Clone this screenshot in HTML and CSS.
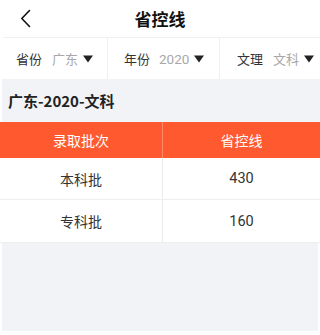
FILE: index.html
```html
<!DOCTYPE html>
<html lang="zh">
<head>
<meta charset="utf-8">
<link rel="stylesheet" href="styles.css">
</head>
<body>
<div class="page">
  <header class="topbar">
    <svg class="back" width="12" height="20" viewBox="0 0 12 20"><path d="M9.5 1.5 L1.8 9.5 L9.5 17.5" fill="none" stroke="#111" stroke-width="1.6" stroke-linecap="round" stroke-linejoin="round"/></svg>
    <h1 class="title">省控线</h1>
  </header>
  <div class="filters">
    <div class="filter f1"><span class="lbl">省份</span><span class="val">广东</span><svg class="tri" width="10" height="8" viewBox="0 0 10 8"><path d="M0 0.5 H10 L5 7.5 Z" fill="#222"/></svg></div>
    <div class="filter f2"><span class="lbl">年份</span><span class="val">2020</span><svg class="tri" width="10" height="8" viewBox="0 0 10 8"><path d="M0 0.5 H10 L5 7.5 Z" fill="#222"/></svg></div>
    <div class="filter f3"><span class="lbl">文理</span><span class="val">文科</span><svg class="tri" width="10" height="8" viewBox="0 0 10 8"><path d="M0 0.5 H10 L5 7.5 Z" fill="#222"/></svg></div>
  </div>
  <div class="caption">广东-2020-文科</div>
  <div class="table">
    <div class="row head"><div class="cell">录取批次</div><div class="cell">省控线</div></div>
    <div class="row r1"><div class="cell">本科批</div><div class="cell">430</div></div>
    <div class="row r2"><div class="cell">专科批</div><div class="cell">160</div></div>
  </div>
  <div class="filler"></div>
</div>
</body>
</html>
```
FILE: styles.css
```css
* { box-sizing: border-box; margin: 0; padding: 0; }
html, body { width: 320px; height: 335px; background: #fff; overflow: hidden; }
body { font-family: "Noto Sans CJK SC", "Noto Sans", sans-serif; color: #333; }
.page { display: flex; flex-direction: column; height: 335px; }
.topbar { height: 38px; display: flex; align-items: center; justify-content: center; position: relative; border-bottom: 1px solid #f0f0f0; margin-left: 3px; }
.back { position: absolute; left: 17px; top: 9px; }
.title { font-size: 17px; font-weight: 700; color: #111; line-height: 1; margin-left: -3px; }
.filters { height: 41px; display: grid; grid-template-columns: 108px 112px 100px; }
.filter { display: flex; align-items: center; padding-left: 17px; border-right: 1px solid #efefef; white-space: nowrap; font-size: 13px; }
.f1 { padding-left: 16px; }
.f2 { padding-left: 16px; }
.f3 { padding-left: 17px; border-right: none; }
.lbl { color: #333; }
.val { color: #a8a8a8; margin-left: 10px; }
.f2 .val { font-family: "Roboto", sans-serif; font-size: 13.5px; margin-left: 9px; }
.tri { margin-left: 5px; }
.caption { height: 43px; background: #f2f3f7; margin: 0 0 0 2px; display: flex; align-items: center; padding-left: 6px; font-size: 15px; font-weight: 700; color: #222; }
.table { display: flex; flex-direction: column; }
.row { display: grid; grid-template-columns: 163px 1fr; }
.cell { display: flex; align-items: center; justify-content: center; font-size: 14px; }
.cell:first-child { border-right: 1px solid #ebebeb; }
.head { height: 36px; background: #ff5a2f; color: #fff; }
.head .cell:first-child { border-right-color: #ff8a6a; }
.r1 { height: 42px; border-bottom: 1px solid #eeeeee; }
.r2 { height: 43px; border-bottom: 1px solid #eeeeee; }
.r1 .cell:last-child, .r2 .cell:last-child { font-family: "Roboto", sans-serif; font-size: 14.5px; color: #333; }
.filler { height: 88px; background: #f2f3f7; margin: 0 2px; }
```
